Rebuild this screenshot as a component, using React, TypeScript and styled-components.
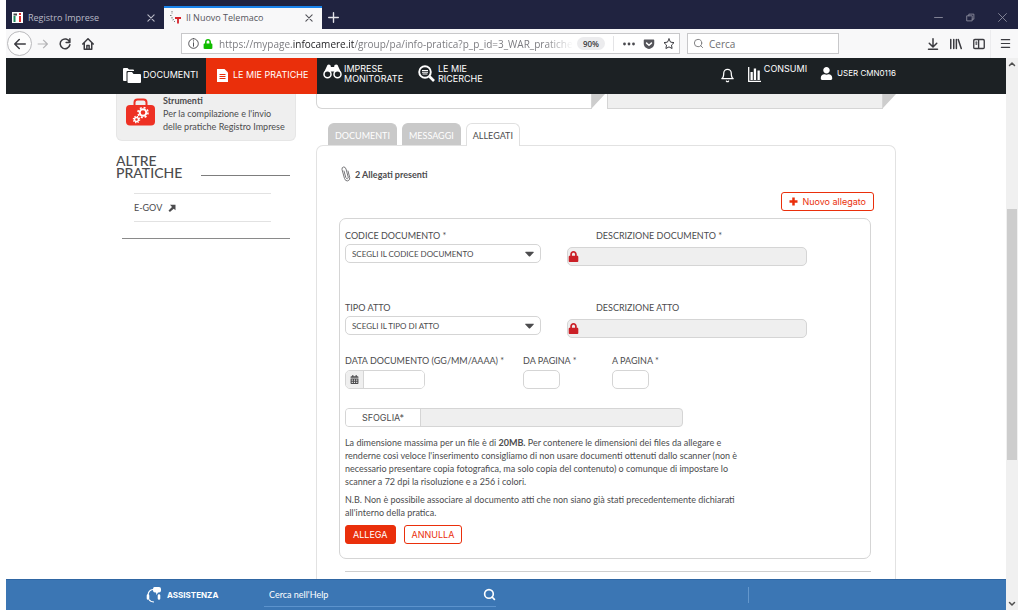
import React from "react";
import styled, { createGlobalStyle, css } from "styled-components";
import { FaLock, FaUser, FaCalendarAlt, FaCaretDown, FaGetPocket } from "react-icons/fa";
import { FiBell, FiSearch, FiStar } from "react-icons/fi";

const ui = `"Open Sans", "Noto Sans", sans-serif`;
const brand = `"Lato", sans-serif`;
const nav = `"Inter", sans-serif`;
const red = "#ea2f0b";
const edge = "#d5d5d5";
const ink = "#4c4c4e";

const Global = createGlobalStyle`
  * { box-sizing: border-box; }
  body { margin: 0; background: #fff; overflow: hidden; }
  button, input, select { font: inherit; color: inherit; margin: 0; padding: 0; }
  a { color: inherit; text-decoration: none; }
  svg { display: block; flex: none; }
  h2, p, ul { margin: 0; padding: 0; }
`;

const Window = styled.div`
  display: flex;
  flex-direction: column;
  height: calc(100vh - 6px);
  margin: 0 6px;
  font-family: ${brand};
  font-size: 9px;
  color: ${ink};
`;

/* Browser frame */
const TitleBar = styled.div`
  display: flex;
  height: 29px;
  flex: none;
  background: #202340;
  font-family: ${ui};
  font-size: 9px;
  color: #b9bac6;
`;
const BrowserTab = styled.div<{ $active?: boolean }>`
  display: flex;
  align-items: center;
  gap: 5px;
  width: 158px;
  margin-top: 6px;
  padding: 0 8px 2px 6px;
  border-top: 2px solid transparent;
  span { flex: 1; }
  ${(p) => p.$active && css`
    background: #f8f8f9;
    border-top-color: #1a84ec;
    color: #55555c;
  `}
`;
const IconButton = styled.button`
  display: flex;
  align-items: center;
  justify-content: center;
  border: 0;
  background: none;
`;
const NewTab = styled(IconButton)`
  width: 22px;
  margin-top: 5px;
  color: #e4e4ea;
`;
const WindowControls = styled.div`
  display: flex;
  gap: 23px;
  align-items: center;
  margin: 6px 11px 0 auto;
  color: #9293a3;
`;
const Toolbar = styled.div`
  display: flex;
  align-items: center;
  height: 29px;
  flex: none;
  padding: 0 7px 0 1px;
  background: #f8f8f9;
  font-family: ${ui};
  font-size: 10px;
  color: #3b3b40;
`;
const Back = styled(IconButton)`
  width: 25px;
  height: 25px;
  border: 1px solid #b9b9bc;
  border-radius: 50%;
  background: #fdfdfd;
`;
const ToolIcons = styled.div`
  display: flex;
  gap: 11px;
  align-items: center;
  margin-left: 5px;
`;
const Address = styled.div`
  display: flex;
  align-items: center;
  gap: 4px;
  flex: 0 1 499px;
  min-width: 0;
  height: 21px;
  margin-left: 87px;
  padding: 0 4px 0 6px;
  border: 1px solid #c8c8ca;
  background: #fff;
`;
const Url = styled.div`
  flex: 1;
  min-width: 0;
  margin-left: 2px;
  overflow: hidden;
  white-space: nowrap;
  color: #7c7c80;
  mask-image: linear-gradient(to right, #000 92%, transparent);
  b { font-weight: 400; color: #1d1d20; }
`;
const Zoom = styled.span`
  flex: none;
  width: 28px;
  margin-right: 4px;
  border-radius: 7px;
  background: #ececee;
  font-size: 8px;
  font-weight: 600;
  line-height: 13px;
  text-align: center;
`;
const AddressActions = styled.div`
  display: flex;
  gap: 8px;
  align-items: center;
  height: 15px;
  padding-left: 9px;
  border-left: 1px solid #e4e4e6;
`;
const WebSearch = styled.label`
  display: flex;
  align-items: center;
  gap: 5px;
  flex: 0 1 152px;
  min-width: 0;
  height: 21px;
  margin-left: 7px;
  padding-left: 5px;
  border: 1px solid #c8c8ca;
  background: #fff;
  input { width: 100%; min-width: 0; border: 0; outline: 0; background: none; }
  input::placeholder { color: #6d6d70; opacity: 1; }
`;
const ToolbarEnd = styled.div`
  display: flex;
  align-items: center;
  margin-left: auto;
  button { width: 23px; }
  button:last-child { height: 28px; width: auto; padding-left: 9px; border-left: 1px solid #ececee; }
`;

/* Page */
const Viewport = styled.div`
  display: flex;
  flex: 1;
  min-height: 0;
`;
const Page = styled.div`
  display: flex;
  flex-direction: column;
  flex: 1;
  min-width: 0;
`;
const Scroll = styled.div`
  display: flex;
  flex-direction: column;
  align-items: center;
  justify-content: space-between;
  width: 12px;
  background: #f0f0f0;
  color: #505050;
  padding: 2px 0;
`;
const Thumb = styled.div`
  width: 10px;
  height: 251px;
  background: #cdcdcd;
`;

const NavBar = styled.nav`
  flex: none;
  height: 36px;
  padding: 0 20px;
  background: #1c2124;
  color: #fff;
  font-family: ${nav};
  font-size: 9px;
  line-height: 10px;
`;
const NavInner = styled.div`
  display: flex;
  height: 100%;
  max-width: 780px;
  margin: 0 auto;
`;
const NavItem = styled.a<{ $active?: boolean; $top?: boolean; $small?: boolean; $gap?: number; $left?: number; $width?: number }>`
  display: flex;
  align-items: ${(p) => (p.$top ? "flex-start" : "center")};
  gap: ${(p) => p.$gap || 0}px;
  width: ${(p) => (p.$width ? `${p.$width}px` : "auto")};
  padding: ${(p) => (p.$top ? 6 : 0)}px 0 ${(p) => (p.$small ? 6 : 2)}px ${(p) => p.$left || 0}px;
  background: ${(p) => (p.$active ? red : "none")};
  font-size: ${(p) => (p.$small ? 8 : 9)}px;
  white-space: nowrap;
`;
const NavEnd = styled.div`
  display: flex;
  gap: 13px;
  margin-left: auto;
`;

const Main = styled.main`
  display: flex;
  flex: 1;
  gap: 20px;
  min-height: 0;
  width: 100%;
  max-width: 780px;
  margin: 0 auto;
  overflow: hidden;
`;
const Side = styled.aside`
  flex: none;
  width: 180px;
`;
const ToolCard = styled.a`
  display: flex;
  gap: 8px;
  height: 47px;
  padding: 0 9px;
  border: 1px solid #e6e6e6;
  border-top: 0;
  border-radius: 0 0 6px 6px;
  background: #efefef;
  line-height: 13px;
  white-space: nowrap;
`;
const SideHead = styled.div`
  display: flex;
  align-items: flex-end;
  gap: 18px;
  margin: 14px 6px 14px 0;
  h2 { width: 67px; font-size: 14px; font-weight: 500; line-height: 12px; }
`;
const Rule = styled.div`
  flex: 1;
  margin-bottom: 3px;
  border-top: 1px solid #7d7d7d;
`;
const SideLink = styled.a`
  display: flex;
  align-items: center;
  gap: 6px;
  height: 29px;
  margin: 0 25px 16px 18px;
  border: solid #e2e2e2;
  border-width: 1px 0;
`;
const SideEnd = styled.div`
  margin: 0 6px;
  border-top: 1px solid #8a8a8a;
`;

const Content = styled.section`
  display: flex;
  flex-direction: column;
  flex: 1;
  min-width: 0;
`;
const Summary = styled.div`
  display: flex;
  gap: 2px;
  height: 15px;
`;
const SummaryBox = styled.div<{ $shaded?: boolean }>`
  display: flex;
  flex: 1;
  div {
    flex: 1;
    border: 1px solid ${edge};
    border-top: 0;
    border-radius: 0 0 0 ${(p) => (p.$shaded ? 0 : 6)}px;
    background: ${(p) => (p.$shaded ? "#efefef" : "#fff")};
  }
`;
const Tabs = styled.div`
  display: flex;
  gap: 5px;
  margin: 14px 0 -1px 12px;
`;
const Tab = styled.button<{ $active?: boolean }>`
  height: 23px;
  padding: 0 6px;
  border: 1px solid #c9c9c9;
  border-bottom: 0;
  border-radius: 6px 6px 0 0;
  background: #c9c9c9;
  color: #fff;
  ${(p) => p.$active && css`
    border-color: #e0e0e0;
    background: #fff;
    color: ${ink};
    z-index: 1;
  `}
`;
const Panel = styled.div`
  flex: 1;
  padding: 20px 24px 0 22px;
  border: 1px solid #e2e2e2;
  border-bottom: 0;
  border-radius: 7px 7px 0 0;
`;
const Count = styled.div`
  display: flex;
  align-items: center;
  gap: 4px;
  height: 16px;
  padding-left: 2px;
  font-weight: 700;
`;
const Actions = styled.div<{ $end?: boolean }>`
  display: flex;
  gap: 8px;
  justify-content: ${(p) => (p.$end ? "flex-end" : "flex-start")};
  margin: ${(p) => (p.$end ? "10px -3px 7px" : "6px 0 0")};
`;
const Button = styled.button<{ $solid?: boolean }>`
  display: flex;
  align-items: center;
  gap: 4px;
  height: 19px;
  padding: 0 7px;
  border: 1px solid ${red};
  border-radius: 3px;
  background: ${(p) => (p.$solid ? red : "#fff")};
  color: ${(p) => (p.$solid ? "#fff" : red)};
  font-family: ${nav};
  font-size: 9px;
`;
const Form = styled.form`
  padding: 10px 5px 14px;
  border: 1px solid ${edge};
  border-radius: 7px;
`;
const FieldRow = styled.div<{ $space: number }>`
  display: flex;
  margin-bottom: ${(p) => p.$space}px;
`;
const Field = styled.div<{ $w: number; $indent?: number }>`
  width: ${(p) => p.$w}px;
  label { display: block; padding-left: ${(p) => p.$indent || 0}px; line-height: 13px; white-space: nowrap; }
`;
const SelectBox = styled.div`
  position: relative;
  width: 196px;
  margin-top: 2px;
  select {
    display: block;
    width: 100%;
    height: 19px;
    padding: 0 24px 0 6px;
    border: 1px solid ${edge};
    border-radius: 5px;
    background: #fff;
    appearance: none;
    font-size: 8px;
  }
  svg { position: absolute; right: 4px; top: 2px; pointer-events: none; }
`;
const LockedBox = styled.div`
  display: flex;
  align-items: center;
  width: 240px;
  height: 19px;
  margin-top: 5px;
  border: 1px solid ${edge};
  border-radius: 5px;
  background: #efefef;
  svg { color: #cb2027; }
  input { flex: 1; min-width: 0; border: 0; background: none; }
`;
const TextInput = styled.input<{ $w: number }>`
  display: block;
  width: ${(p) => p.$w}px;
  height: 19px;
  margin-top: 3px;
  border: 1px solid ${edge};
  border-radius: 5px;
  background: #fff;
`;
const DateBox = styled.div`
  display: flex;
  width: 80px;
  height: 19px;
  margin-top: 3px;
  border: 1px solid ${edge};
  border-radius: 5px;
  overflow: hidden;
  button { width: 18px; border-right: 1px solid ${edge}; background: #efefef; }
  input { flex: 1; min-width: 0; border: 0; }
`;
const FileBox = styled.div`
  display: flex;
  width: 338px;
  max-width: 100%;
  height: 19px;
  margin-bottom: 9px;
  border: 1px solid ${edge};
  border-radius: 4px;
  overflow: hidden;
  background: #efefef;
  button { width: 75px; border: 0; border-right: 1px solid ${edge}; background: #fff; font-family: ${nav}; font-size: 9px; }
  input { flex: 1; min-width: 0; border: 0; background: none; }
`;
const Note = styled.p`
  margin-bottom: 5px;
  line-height: 13px;
  white-space: nowrap;
`;
const Divider = styled.div`
  margin: 12px 0 0 6px;
  border-top: 1px solid #cfcfcf;
`;

const HelpBar = styled.footer`
  flex: none;
  height: 31px;
  padding: 0 20px;
  background: #3b76b4;
  border-top: 1px solid #2f66a3;
  color: #fff;
`;
const HelpInner = styled.div`
  display: flex;
  align-items: center;
  height: 100%;
  max-width: 780px;
  margin: 0 auto;
`;
const Assist = styled.a`
  display: flex;
  align-items: center;
  gap: 6px;
  width: 118px;
  margin-left: 30px;
  font-family: ${nav};
  font-size: 8px;
  font-weight: 700;
`;
const HelpSearch = styled.label`
  display: flex;
  align-items: center;
  flex: 0 1 232px;
  height: 24px;
  padding-left: 5px;
  border-bottom: 1px solid #5c93cd;
  input { flex: 1; min-width: 0; border: 0; outline: 0; background: none; }
  input::placeholder { color: #fff; opacity: 1; }
`;
const HelpMark = styled.div`
  height: 16px;
  margin-left: 252px;
  border-left: 1px solid #6497cc;
`;

const Line = ({ d, s = 12, w = 1.5, box = 16 }: { d: string; s?: number; w?: number; box?: number }) => (
  <svg width={s} height={s} viewBox={`0 0 ${box} ${box}`} fill="none" stroke="currentColor" strokeWidth={w} strokeLinecap="round" strokeLinejoin="round" aria-hidden="true">
    <path d={d} />
  </svg>
);
const X = "M3 3l10 10M13 3L3 13";

const RegistroLogo = () => (
  <svg width="11" height="11" viewBox="0 0 11 11" aria-hidden="true">
    <rect width="11" height="11" fill="#fff" />
    <path d="M1.500 10V4H3.500v6z" fill="#1d8b5b" />
    <path d="M1.500 1.500H5v2H1.500z" fill="#44484a" />
    <path d="M7 4h2v6H7zM7 1h2v2H7z" fill="#e02b2b" />
  </svg>
);
const TelemacoLogo = () => (
  <svg width="11" height="13" viewBox="0 0 11 13" fill="none" aria-hidden="true">
    <path d="M2 0v3M0 4.500h2M2 6v2M3.500 8l-1 2M4 10.500h1" stroke="#777" strokeDasharray="1.500 1" />
    <path d="M5 7h6M8 7v5.500" stroke="#d8232a" strokeWidth="1.800" />
  </svg>
);
const Folders = () => (
  <svg width="18" height="15" viewBox="0 0 18 15" fill="#fff" aria-hidden="true">
    <path d="M0 1q0-1 1-1h3.500l1.500 1.500h4q1 0 1 1V3H4.500q-1 0-1 1v9H1q-1 0-1-1z" />
    <path d="M4.500 5q0-1 1-1H9l1.500 2H17q1 0 1 1v7q0 1-1 1H5.500q-1 0-1-1z" />
  </svg>
);
const Sheet = () => (
  <svg width="11" height="13" viewBox="0 0 11 13" aria-hidden="true">
    <path d="M0 0h7.500L11 3.500V13H0z" fill="#fff" />
    <path d="M2.500 5.500h6M2.500 7.500h6M2.500 9.500h6" stroke={red} />
  </svg>
);
const Binoculars = () => (
  <svg width="19" height="15" viewBox="0 0 19 15" aria-hidden="true">
    <path d="M4 2Q4 .5 5.800.5T7.800 2v1h3.400V2q0-1.500 2-1.500T15 2l2.800 6-3.300 1-4-1.500h-2L4.500 9 1.200 8z" fill="#fff" />
    <circle cx="4.500" cy="10.300" r="3.500" fill="#1c2124" stroke="#fff" strokeWidth="1.500" />
    <circle cx="14.500" cy="10.300" r="3.500" fill="#1c2124" stroke="#fff" strokeWidth="1.500" />
  </svg>
);
const SearchList = () => (
  <svg width="17" height="18" viewBox="0 -1 17 18" fill="none" stroke="#fff" aria-hidden="true">
    <circle cx="7" cy="7" r="5.800" strokeWidth="1.900" />
    <path d="M11.500 11.500L16 16" strokeWidth="2.600" />
    <path d="M4 5.500h6M4 7.200h6M4.500 9h5" strokeWidth="1.100" />
  </svg>
);
const Chart = () => (
  <svg width="13" height="18" viewBox="0 -3 13 18" aria-hidden="true">
    <path d="M.7 0v14.300H13" stroke="#fff" strokeWidth="1.300" fill="none" />
    <path d="M2.500 5h2.300v8H2.500zM5.800 1.500h2.300V13H5.800zM9.500 3.500h2.300V13H9.500z" fill="#fff" />
  </svg>
);
const Toolbox = () => (
  <svg width="29" height="32" viewBox="0 0 29 32" aria-hidden="true">
    <path d="M8.500 12V8.500q0-3 3-3h6q3 0 3 3V12" fill="none" stroke="#ee3124" strokeWidth="2" />
    <rect y="11" width="29" height="20.500" rx="4" fill="#ee3124" />
    <g fill="none" stroke="#fff">
      <circle cx="17" cy="18.500" r="3.300" strokeWidth="2" />
      <circle cx="17" cy="18.500" r="5" strokeWidth="1.600" strokeDasharray="2 1.930" />
      <circle cx="10.500" cy="25.500" r="2" strokeWidth="1.500" />
      <circle cx="10.500" cy="25.500" r="3.200" strokeWidth="1.200" strokeDasharray="1.300 1.210" />
    </g>
  </svg>
);
const Fold = () => (
  <svg width="13" height="15" viewBox="0 0 13 15" aria-hidden="true">
    <path d="M0 0h13L0 14z" fill="#cdcdcd" />
  </svg>
);
const Clip = () => (
  <svg width="10" height="16" viewBox="0 0 10 16" fill="none" stroke="#77777a" strokeLinecap="round" aria-hidden="true">
    <path d="M3 5l1.800 6.500q.6 1.500 1.700 1.200 1-.4.700-1.700L5 3Q4.300.700 2.500 1T1 3.500l2.500 9q.9 2.800 3.200 2.400 2.600-.7 2-3.500L7 5" />
  </svg>
);
const Headset = () => (
  <svg width="15" height="16" viewBox="0 0 15 16" fill="none" stroke="#fff" aria-hidden="true">
    <path d="M7 2.500Q2.500 3 2 8M3 12.500Q4.500 15 8 15" strokeWidth="1.200" />
    <path d="M2 8.500v3M13 8.500v3" strokeWidth="2.600" strokeLinecap="round" />
    <path d="M8.500 0H13q2 0 2 2v1.500q0 2-2 2h-1L10.500 8 10 5.500H9Q7 5.500 7 3.500V2Q7 0 8.500 0z" fill="#fff" stroke="none" />
  </svg>
);
const Plus = () => (
  <svg width="9" height="9" viewBox="0 0 9 9" stroke="currentColor" strokeWidth="2.500" aria-hidden="true">
    <path d="M4.500.5v8M.5 4.500h8" />
  </svg>
);
const Arrow = () => (
  <svg width="8" height="8" viewBox="0 0 8 8" fill="currentColor" aria-hidden="true">
    <path d="M2 .8H7.500V6.300L5.700 4.700 1.900 7.900.5 6.500l3.500-3.500z" />
  </svg>
);

export default function App() {
  return (
    <>
      <Global />
      <Window>
        <TitleBar>
          <BrowserTab>
            <RegistroLogo />
            <span>Registro Imprese</span>
            <Line d={X} s={10} w={1.8} />
          </BrowserTab>
          <BrowserTab $active>
            <TelemacoLogo />
            <span>Il Nuovo Telemaco</span>
            <Line d={X} s={10} w={1.8} />
          </BrowserTab>
          <NewTab aria-label="Nuova scheda"><Line d="M8 1v14M1 8h14" s={11} w={2} /></NewTab>
          <WindowControls>
            <Line d="M1 8h14" s={9} />
            <Line d="M2 5h9v9H2zM5 5V2h9v9h-3" s={9} />
            <Line d="M1 1l14 14M15 1L1 15" s={9} />
          </WindowControls>
        </TitleBar>
        <Toolbar>
          <Back aria-label="Indietro"><Line d="M15 8H1M7 2L1 8l6 6" s={12} w={2} /></Back>
          <ToolIcons>
            <svg width="11" height="12" viewBox="0 0 16 16" fill="none" stroke="#b3b3b6" strokeWidth="1.800" aria-hidden="true"><path d="M1 8h14M9 2l6 6-6 6" /></svg>
            <Line d="M14 5A6.500 6.500 0 1 0 14.500 9M14.500 1v5h-5" s={12} w={2} />
            <Line d="M1 8l7-7 7 7M3 7v8h10V7M6.500 15v-5h3v5" s={12} w={2} />
          </ToolIcons>
          <Address>
            <Line d="M8 1a7 7 0 1 0 .01 0M8 7v5M8 4v.5" s={11} w={1.3} />
            <FaLock size={10} color="#12bc00" />
            <Url>https://mypage.<b>infocamere.it</b>/group/pa/info-pratica?p_p_id=3_WAR_pratichen</Url>
            <Zoom>90%</Zoom>
            <AddressActions>
              <svg width="12" height="4" viewBox="0 0 12 4" fill="#4a4a4f" aria-hidden="true"><circle cx="1.500" cy="2" r="1.400" /><circle cx="6" cy="2" r="1.400" /><circle cx="10.500" cy="2" r="1.400" /></svg>
              <FaGetPocket size={12} color="#55555a" />
              <FiStar size={12} />
            </AddressActions>
          </Address>
          <WebSearch>
            <FiSearch size={11} color="#77777a" />
            <input placeholder="Cerca" aria-label="Cerca" />
          </WebSearch>
          <ToolbarEnd>
            <IconButton aria-label="Download"><Line d="M8 1v10M3 7l5 5 5-5M2 15h12" s={12} w={2} /></IconButton>
            <IconButton aria-label="Libreria"><Line d="M1 2v12M5 2v12M8.500 2v12M11 2l4 12" s={12} w={2} /></IconButton>
            <IconButton aria-label="Barra laterale"><Line d="M2.500 2h11q1.500 0 1.500 1.500v9q0 1.500-1.500 1.500h-11Q1 14 1 12.500v-9Q1 2 2.500 2zM7.500 2v12M4 5.500h1M4 8h1" s={12} w={1.8} /></IconButton>
            <IconButton aria-label="Menu"><Line d="M2 2.500h12M2 8h12M2 13.500h12" s={11} w={1.8} /></IconButton>
          </ToolbarEnd>
        </Toolbar>

        <Viewport>
          <Page>
            <NavBar>
              <NavInner>
                <NavItem href="#" $gap={2} $left={7} $width={90}><Folders />DOCUMENTI</NavItem>
                <NavItem href="#" $active $gap={5} $left={11} $width={111}><Sheet />LE MIE PRATICHE</NavItem>
                <NavItem href="#" $top $gap={2} $left={6} $width={95}><Binoculars /><span>IMPRESE<br />MONITORATE</span></NavItem>
                <NavItem href="#" $top $gap={3} $left={6}><SearchList /><span>LE MIE<br />RICERCHE</span></NavItem>
                <NavEnd>
                  <NavItem href="#" aria-label="Notifiche"><FiBell size={15} /></NavItem>
                  <NavItem href="#" $top $gap={3}><Chart />CONSUMI</NavItem>
                  <NavItem href="#" $small $gap={4}><FaUser size={13} />USER CMN0116</NavItem>
                </NavEnd>
              </NavInner>
            </NavBar>

            <Main>
              <Side>
                <ToolCard href="#">
                  <Toolbox />
                  <span><b>Strumenti</b><br />Per la compilazione e l'invio<br />delle pratiche Registro Imprese</span>
                </ToolCard>
                <SideHead><h2>ALTRE PRATICHE</h2><Rule /></SideHead>
                <SideLink href="#">E-GOV <Arrow /></SideLink>
                <SideEnd />
              </Side>

              <Content>
                <Summary>
                  <SummaryBox><div /><Fold /></SummaryBox>
                  <SummaryBox $shaded><div /><Fold /></SummaryBox>
                </Summary>
                <Tabs>
                  <Tab>DOCUMENTI</Tab>
                  <Tab>MESSAGGI</Tab>
                  <Tab $active>ALLEGATI</Tab>
                </Tabs>
                <Panel>
                  <Count><Clip />2 Allegati presenti</Count>
                  <Actions $end><Button><Plus />Nuovo allegato</Button></Actions>
                  <Form>
                    <FieldRow $space={35}>
                      <Field $w={222}>
                        <label htmlFor="codice">CODICE DOCUMENTO *</label>
                        <SelectBox><select id="codice"><option>SCEGLI IL CODICE DOCUMENTO</option></select><FaCaretDown size={15} /></SelectBox>
                      </Field>
                      <Field $w={240} $indent={29}>
                        <label htmlFor="descDoc">DESCRIZIONE DOCUMENTO *</label>
                        <LockedBox><FaLock size={11} /><input id="descDoc" readOnly /></LockedBox>
                      </Field>
                    </FieldRow>
                    <FieldRow $space={16}>
                      <Field $w={222}>
                        <label htmlFor="tipo">TIPO ATTO</label>
                        <SelectBox><select id="tipo"><option>SCEGLI IL TIPO DI ATTO</option></select><FaCaretDown size={15} /></SelectBox>
                      </Field>
                      <Field $w={240} $indent={29}>
                        <label htmlFor="descAtto">DESCRIZIONE ATTO</label>
                        <LockedBox><FaLock size={11} /><input id="descAtto" readOnly /></LockedBox>
                      </Field>
                    </FieldRow>
                    <FieldRow $space={19}>
                      <Field $w={178}>
                        <label htmlFor="data">DATA DOCUMENTO (GG/MM/AAAA) *</label>
                        <DateBox><IconButton type="button" aria-label="Calendario"><FaCalendarAlt size={9} /></IconButton><input id="data" /></DateBox>
                      </Field>
                      <Field $w={89}>
                        <label htmlFor="da">DA PAGINA *</label>
                        <TextInput id="da" $w={37} />
                      </Field>
                      <Field $w={60}>
                        <label htmlFor="a">A PAGINA *</label>
                        <TextInput id="a" $w={37} />
                      </Field>
                    </FieldRow>
                    <FileBox><button type="button">SFOGLIA*</button><input aria-label="File" readOnly /></FileBox>
                    <Note>
                      La dimensione massima per un file è di <b>20MB.</b> Per contenere le dimensioni dei files da allegare e<br />
                      renderne così veloce l'inserimento consigliamo di non usare documenti ottenuti dallo scanner (non è<br />
                      necessario presentare copia fotografica, ma solo copia del contenuto) o comunque di impostare lo<br />
                      scanner a 72 dpi la risoluzione e a 256 i colori.
                    </Note>
                    <Note>
                      N.B. Non è possibile associare al documento atti che non siano già stati precedentemente dichiarati<br />
                      all'interno della pratica.
                    </Note>
                    <Actions>
                      <Button type="button" $solid>ALLEGA</Button>
                      <Button type="button">ANNULLA</Button>
                    </Actions>
                  </Form>
                  <Divider />
                </Panel>
              </Content>
            </Main>

            <HelpBar>
              <HelpInner>
                <Assist href="#"><Headset />ASSISTENZA</Assist>
                <HelpSearch>
                  <input placeholder="Cerca nell'Help" aria-label="Cerca nell'Help" />
                  <FiSearch size={13} strokeWidth={3} />
                </HelpSearch>
                <HelpMark />
              </HelpInner>
            </HelpBar>
          </Page>
          <Scroll>
            <Line d="M3 11l5-5 5 5" s={8} w={3} />
            <Thumb />
            <Line d="M3 5l5 5 5-5" s={8} w={3} />
          </Scroll>
        </Viewport>
      </Window>
    </>
  );
}
